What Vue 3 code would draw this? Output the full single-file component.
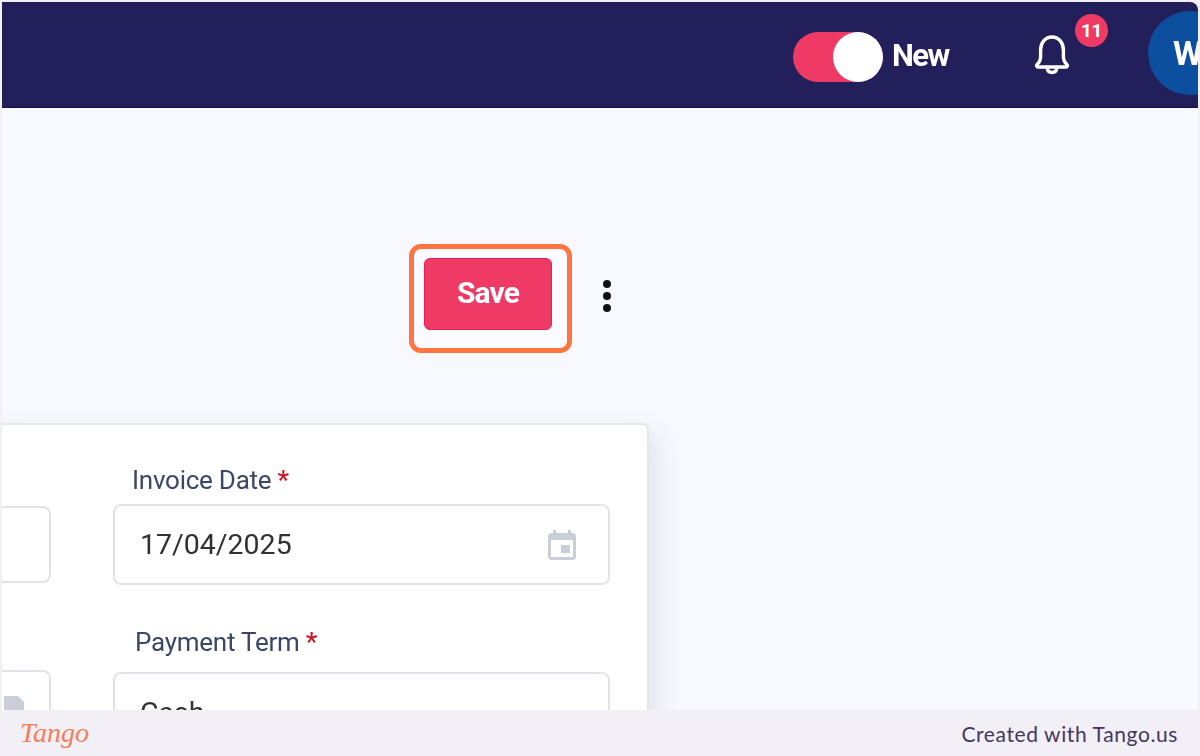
<template>
  <div class="frame">
    <div class="screen">
      <header class="topbar">
        <span class="toggle"><span class="knob"></span></span>
        <span class="toggle-label">New</span>
        <button class="bell">
          <svg width="42" height="44" viewBox="0 0 42 44" fill="none" stroke="#fff" stroke-width="3.4" stroke-linejoin="round" stroke-linecap="round">
            <path d="M6 31.500c2.600-2.200 3.600-4.400 3.600-8v-6.500C9.600 9.500 14.500 4 21 4S32.400 9.500 32.400 17v6.500c0 3.600 1 5.800 3.600 8 1 1 .4 2.500-1 2.500H7c-1.400 0-2-1.500-1-2.500z" />
            <path d="M16 34.500c.4 3 2.400 5 5 5s4.600-2 5-5" />
          </svg>
          <span class="badge">11</span>
        </button>
        <span class="avatar">W</span>
      </header>

      <main class="content">
        <div class="actions">
          <div class="save-ring">
            <button class="save">Save</button>
          </div>
          <span class="more">
            <i></i><i></i><i></i>
          </span>
        </div>

        <section class="card">
          <div class="row">
            <div class="field">
              <div class="input input-short"></div>
            </div>
            <div class="field">
              <label>Invoice Date <b>*</b></label>
              <div class="input">
                <span>17/04/2025</span>
                <svg class="cal" width="34" height="34" viewBox="0 0 34 34" fill="#c9ced8">
                  <path fill-rule="evenodd" d="M8 2h3v3h12V2h3v3h1.500C29.500 5 31 6.500 31 8.500v20c0 2-1.500 3.500-3.500 3.500h-21C4.500 32 3 30.500 3 28.500v-20C3 6.500 4.500 5 6.500 5H8V2zM6 12v17h22V12H6z" />
                  <rect x="16" y="17" width="9" height="8" />
                </svg>
              </div>
            </div>
          </div>
          <div class="row row-second">
            <div class="field">
              <div class="input input-left">
                <svg width="20" height="30" viewBox="0 0 20 30" fill="#c9ced8"><path d="M0 2h14l6 6v22H0z" /></svg>
              </div>
            </div>
            <div class="field">
              <label class="shift">Payment Term <b>*</b></label>
              <div class="input"><span>Cash</span></div>
            </div>
          </div>
        </section>
      </main>
    </div>

    <footer class="tango-bar">
      <span class="tango-logo">Tango</span>
      <span class="credit">Created with Tango.us</span>
    </footer>
  </div>
</template>

<script setup>
</script>

<style>
body {
  overflow: hidden;
}
</style>

<style scoped>
* {
  box-sizing: border-box;
}

.frame {
  width: 1200px;
  height: 756px;
  display: flex;
  flex-direction: column;
  background: #f2f0f6;
  overflow: hidden;
  font-family: Roboto, "Liberation Sans", sans-serif;
}

.screen {
  height: 708px;
  margin: 2px 2px 0;
  flex: none;
  overflow: hidden;
  background: #f8f9fe;
  border-top-right-radius: 8px;
  filter: blur(0.6px);
}

.topbar {
  height: 106px;
  background: #221f5a;
  border-bottom: 1px solid #14104d;
  display: flex;
  align-items: center;
  justify-content: flex-end;
  padding-top: 3px;
  margin-right: -34px;
  color: #fff;
}

.toggle {
  width: 90px;
  height: 50px;
  border-radius: 25px;
  background: #f03a66;
  display: flex;
  justify-content: flex-end;
  margin-top: 2px;
}

.knob {
  width: 50px;
  height: 50px;
  border-radius: 50%;
  background: #fff;
}

.toggle-label {
  margin-left: 9px;
  font-size: 31px;
  font-weight: 700;
  letter-spacing: -1.6px;
  width: 58px;
  margin-top: -2px;
}

.bell {
  position: relative;
  margin-left: 81px;
  width: 42px;
  height: 44px;
  padding: 0;
  border: 0;
  background: none;
  margin-top: -3px;
}

.bell svg {
  display: block;
}

.badge {
  position: absolute;
  left: 44px;
  top: -19px;
  width: 33px;
  height: 33px;
  border-radius: 50%;
  background: #ef3a66;
  color: #fff;
  font: 700 19px/33px Roboto, sans-serif;
  text-align: center;
  letter-spacing: -0.5px;
}

.avatar {
  margin-left: 75px;
  width: 84px;
  height: 84px;
  border-radius: 50%;
  background: #0d4f9f;
  font-size: 34px;
  font-weight: 700;
  line-height: 84px;
  padding-left: 25px;
  margin-top: -6px;
}

.content {
  display: flex;
  flex-direction: column;
}

.actions {
  display: flex;
  margin: 136px 0 0 407px;
  height: 179px;
  align-items: flex-start;
}

.save-ring {
  border: 5px solid #ff7440;
  border-radius: 12px;
  padding: 9px 15px 18px 10px;
  background: #fbfbff;
}

.save {
  display: block;
  width: 128px;
  height: 72px;
  border: 1px solid #ee1c55;
  border-radius: 6px;
  background: #f03a66;
  color: #fff;
  font: 700 30px Roboto, sans-serif;
  letter-spacing: -0.9px;
  padding: 0 0 4px;
}

.more {
  display: flex;
  flex-direction: column;
  gap: 4px;
  margin: 36px 0 0 31px;
}

.more i {
  width: 8px;
  height: 8px;
  background: #111;
  border-radius: 50%;
}

.card {
  width: 667px;
  height: 320px;
  margin-left: -20px;
  background: #fff;
  border: 2px solid #e6e6ea;
  border-radius: 6px;
  box-shadow: 8px 10px 26px rgba(60, 70, 110, 0.12);
  padding-top: 41px;
}

.row {
  display: grid;
  grid-template-columns: 67px 497px;
  column-gap: 62px;
  align-items: end;
}

.row-second {
  margin-top: 43px;
}

.field label {
  display: block;
  height: 38px;
  padding-left: 19px;
  color: #3c4668;
  font-size: 26px;
  line-height: 28px;
  letter-spacing: -0.25px;
}

.field label.shift {
  padding-left: 22px;
  height: 44px;
}

.field label b {
  color: #cf1124;
  font-weight: 500;
}

.input {
  height: 81px;
  border: 2px solid #e4e4e8;
  border-radius: 8px;
  background: #fff;
  display: flex;
  align-items: center;
  justify-content: space-between;
  padding: 0 29px 0 25px;
  color: #2f3133;
  font-size: 28.500px;
}

.input-short {
  height: 77px;
  margin-bottom: 2px;
}

.input-left {
  height: 83px;
  justify-content: flex-start;
  align-items: flex-start;
  padding: 22px 0 0 18px;
}

.tango-bar {
  flex: 1;
  display: flex;
  align-items: center;
  justify-content: space-between;
  padding: 0 22px 0 20px;
  border-bottom-left-radius: 8px;
}

.tango-logo {
  color: #fa6a3c;
  font: italic 400 28px "Liberation Serif", serif;
  opacity: 0.85;
}

.credit {
  color: #45365f;
  font: 400 21px Lato, sans-serif;
  letter-spacing: 0.6px;
}
</style>
